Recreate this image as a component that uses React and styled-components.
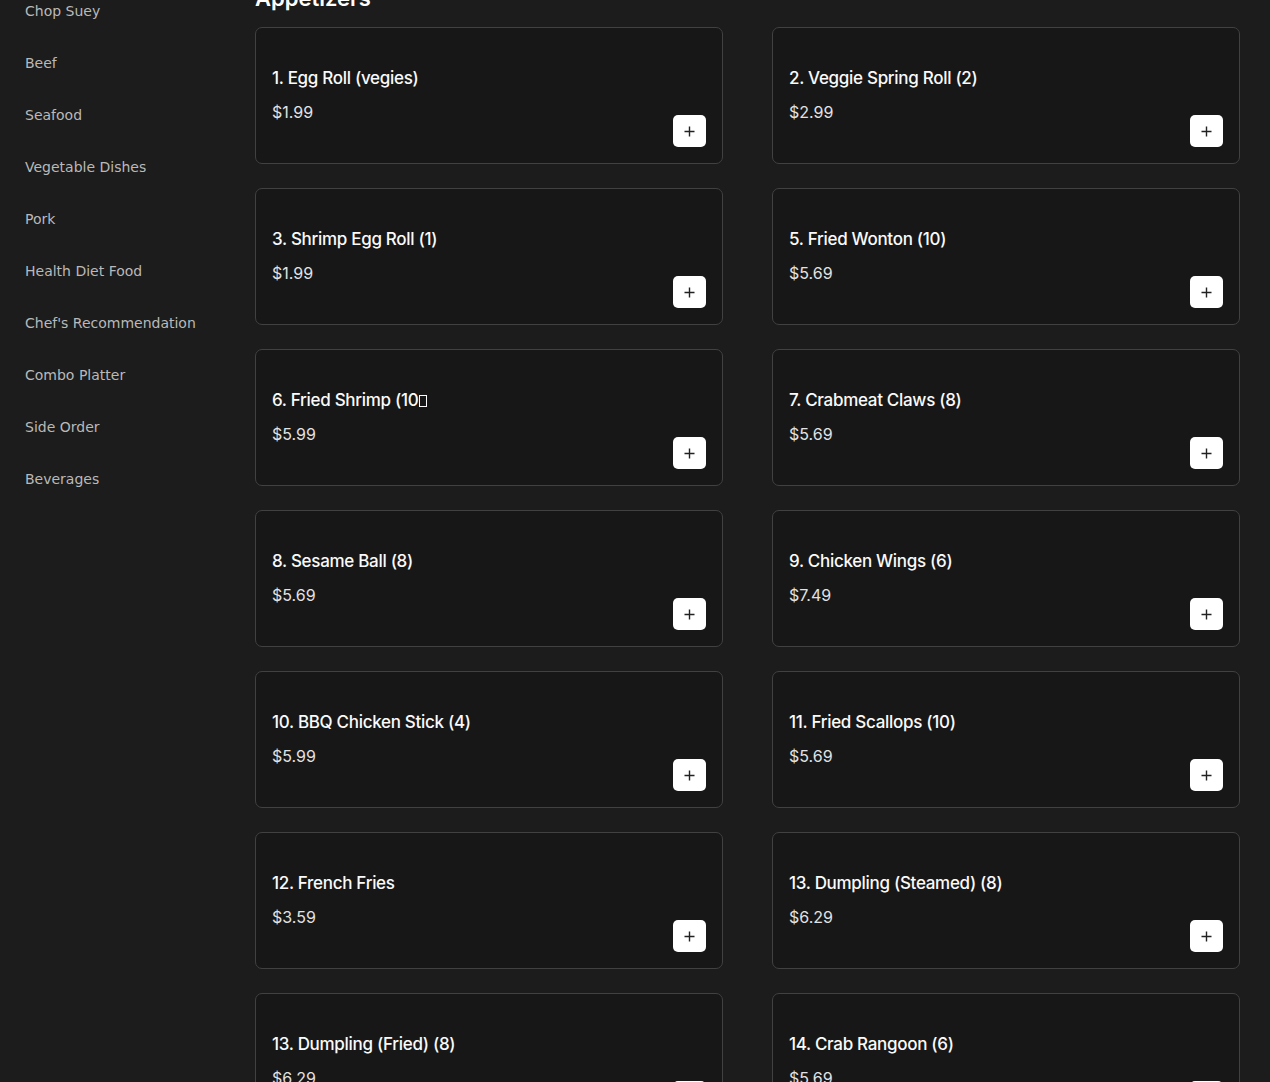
import React from "react";
import styled, { createGlobalStyle } from "styled-components";

const Global = createGlobalStyle`
  html, body { margin: 0; padding: 0; background: #1c1c1c; }
  body { font-family: "DejaVu Sans", sans-serif; overflow: hidden; }
`;

const Layout = styled.div`
  display: grid;
  grid-template-columns: 230px 1fr;
  min-height: 1082px;
  background: #1c1c1c;
`;

const Sidebar = styled.nav`
  display: flex;
  flex-direction: column;
  padding-left: 25px;
  margin-top: -15px;
`;

const NavItem = styled.a`
  display: flex;
  align-items: center;
  height: 52px;
  font-family: "DejaVu Sans", sans-serif;
  font-size: 14px;
  color: #b9b9b9;
  text-decoration: none;
`;

const Main = styled.main`
  padding: 0 30px 0 25px;
  margin-top: -16px;
`;

const Heading = styled.h2`
  margin: 0 0 15px;
  font-family: "Inter", sans-serif;
  font-size: 22px;
  line-height: 28px;
  font-weight: 600;
  color: #fff;
`;

const Grid = styled.div`
  display: grid;
  grid-template-columns: 1fr 1fr;
  column-gap: 49px;
  row-gap: 24px;
`;

const Card = styled.div`
  box-sizing: border-box;
  height: 137px;
  padding: 16px;
  background: #171717;
  border: 1px solid #414141;
  border-radius: 7px;
  display: flex;
  justify-content: space-between;
  align-items: flex-end;
`;

const Info = styled.div`
  align-self: flex-start;
  padding-top: 23px;
  display: flex;
  flex-direction: column;
  gap: 12px;
`;

const Title = styled.div`
  font-family: "Inter", sans-serif;
  font-size: 17px;
  line-height: 22px;
  font-weight: 500;
  color: #fafafa;
  letter-spacing: -0.3px;
`;

const Tofu = styled.span`
  display: inline-block;
  box-sizing: border-box;
  width: 8px;
  height: 12px;
  border: 1.5px solid #fafafa;
  margin-left: 1px;
  vertical-align: -1px;
`;

const Price = styled.div`
  font-family: "Inter", sans-serif;
  font-size: 16px;
  line-height: 22px;
  font-weight: 400;
  color: #e2e2e2;
`;

const AddButton = styled.button`
  width: 33px;
  height: 32px;
  padding: 0;
  border: none;
  border-radius: 5px;
  background: #fff;
  display: flex;
  align-items: center;
  justify-content: center;
  cursor: pointer;
`;

const Plus = () => (
  <svg width="11" height="11" viewBox="0 0 11 11">
    <path d="M5.5 0.5v10M0.5 5.5h10" stroke="#222" strokeWidth="1.4" />
  </svg>
);

const categories = [
  "Chop Suey",
  "Beef",
  "Seafood",
  "Vegetable Dishes",
  "Pork",
  "Health Diet Food",
  "Chef's Recommendation",
  "Combo Platter",
  "Side Order",
  "Beverages",
];

const items = [
  ["1. Egg Roll (vegies)", "$1.99"],
  ["2. Veggie Spring Roll (2)", "$2.99"],
  ["3. Shrimp Egg Roll (1)", "$1.99"],
  ["5. Fried Wonton (10)", "$5.69"],
  ["6. Fried Shrimp (10", "$5.99", true],
  ["7. Crabmeat Claws (8)", "$5.69"],
  ["8. Sesame Ball (8)", "$5.69"],
  ["9. Chicken Wings (6)", "$7.49"],
  ["10. BBQ Chicken Stick (4)", "$5.99"],
  ["11. Fried Scallops (10)", "$5.69"],
  ["12. French Fries", "$3.59"],
  ["13. Dumpling (Steamed) (8)", "$6.29"],
  ["13. Dumpling (Fried) (8)", "$6.29"],
  ["14. Crab Rangoon (6)", "$5.69"],
];

export default function App() {
  return (
    <>
      <Global />
      <Layout>
        <Sidebar>
          {categories.map((c) => (
            <NavItem key={c}>{c}</NavItem>
          ))}
        </Sidebar>
        <Main>
          <Heading>Appetizers</Heading>
          <Grid>
            {items.map(([name, price, broken]) => (
              <Card key={name}>
                <Info>
                  <Title>
                    {name}
                    {broken && <Tofu />}
                  </Title>
                  <Price>{price}</Price>
                </Info>
                <AddButton aria-label="Add">
                  <Plus />
                </AddButton>
              </Card>
            ))}
          </Grid>
        </Main>
      </Layout>
    </>
  );
}
